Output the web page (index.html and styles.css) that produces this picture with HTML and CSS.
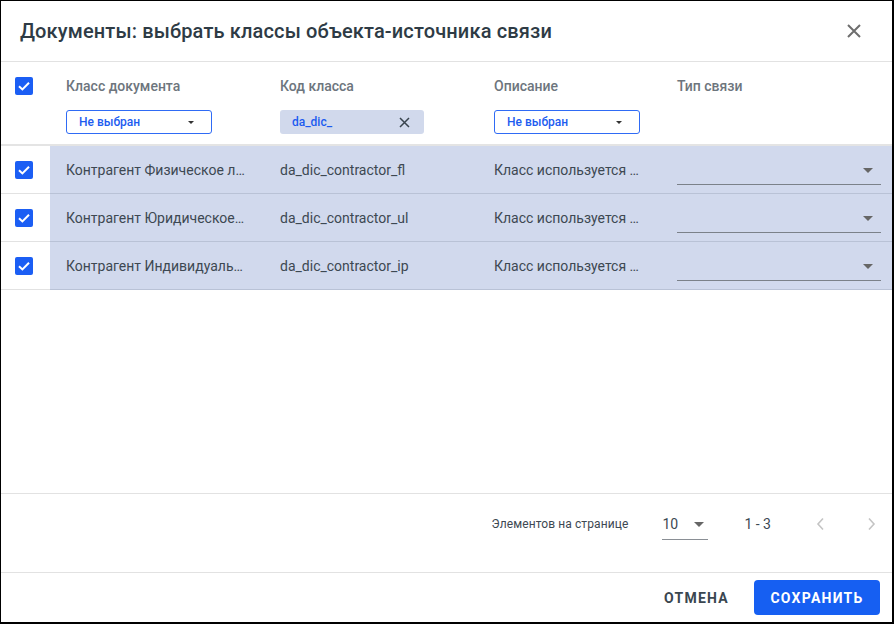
FILE: index.html
```html
<!DOCTYPE html>
<html lang="ru">
<head>
  <meta charset="UTF-8" />
  <title>Документы: выбрать классы объекта-источника связи</title>
  <link rel="stylesheet" href="styles.css">
</head>
<body>
  <div class="dialog">
    <div class="dialog-header">
      <h1>Документы: выбрать классы объекта-источника связи</h1>
      <button class="close-btn" aria-label="Закрыть">
        <svg width="14" height="14" viewBox="0 0 14 14"><path d="M1 1L13 13M13 1L1 13" stroke="#6e6e6e" stroke-width="2" fill="none"/></svg>
      </button>
    </div>

    <div class="table">
      <div class="row head">
        <div class="cell check"><span class="checkbox"></span></div>
        <div class="cell">
          <div class="label">Класс документа</div>
          <div class="filter">Не выбран <span class="caret"></span></div>
        </div>
        <div class="cell">
          <div class="label">Код класса</div>
          <div class="chip">da_dic_
            <svg width="11" height="11" viewBox="0 0 11 11"><path d="M1 1L10 10M10 1L1 10" stroke="#39444e" stroke-width="1.5" fill="none"/></svg>
          </div>
        </div>
        <div class="cell">
          <div class="label">Описание</div>
          <div class="filter">Не выбран <span class="caret"></span></div>
        </div>
        <div class="cell">
          <div class="label">Тип связи</div>
        </div>
      </div>

      <div class="row item">
        <div class="cell check"><span class="checkbox"></span></div>
        <div class="cell"><span class="ellipsis">Контрагент Физическое лицо</span></div>
        <div class="cell">da_dic_contractor_fl</div>
        <div class="cell"><span class="ellipsis">Класс используется для хранения</span></div>
        <div class="cell"><div class="line-select"><span class="caret big"></span></div></div>
      </div>
      <div class="row item">
        <div class="cell check"><span class="checkbox"></span></div>
        <div class="cell"><span class="ellipsis">Контрагент Юридическое лицо</span></div>
        <div class="cell">da_dic_contractor_ul</div>
        <div class="cell"><span class="ellipsis">Класс используется для хранения</span></div>
        <div class="cell"><div class="line-select"><span class="caret big"></span></div></div>
      </div>
      <div class="row item">
        <div class="cell check"><span class="checkbox"></span></div>
        <div class="cell"><span class="ellipsis">Контрагент Индивидуальный предприниматель</span></div>
        <div class="cell">da_dic_contractor_ip</div>
        <div class="cell"><span class="ellipsis">Класс используется для хранения</span></div>
        <div class="cell"><div class="line-select"><span class="caret big"></span></div></div>
      </div>
    </div>

    <div class="paginator">
      <span class="page-label">Элементов на странице</span>
      <div class="page-size">10 <span class="caret big"></span></div>
      <span class="range">1 - 3</span>
      <button class="nav-btn" aria-label="Назад">
        <svg width="10" height="14" viewBox="0 0 10 14"><path d="M7 1.5L2 7L7 12.5" stroke="#c4c4c4" stroke-width="1.6" fill="none"/></svg>
      </button>
      <button class="nav-btn" aria-label="Вперёд">
        <svg width="10" height="14" viewBox="0 0 10 14"><path d="M3 1.5L8 7L3 12.5" stroke="#c4c4c4" stroke-width="1.6" fill="none"/></svg>
      </button>
    </div>

    <div class="dialog-footer">
      <button class="btn btn-text">Отмена</button>
      <button class="btn btn-primary">Сохранить</button>
    </div>
  </div>
</body>
</html>
```

FILE: styles.css
```css
* {
  box-sizing: border-box;
}
body {
  margin: 0;
  font-family: Roboto, "Liberation Sans", Arial, sans-serif;
  background: #fff;
  color: #3b4650;
}
button {
  font-family: inherit;
  border: none;
  background: none;
  cursor: pointer;
  padding: 0;
}
.dialog {
  width: 894px;
  height: 624px;
  border: 1px solid #000;
  border-right-width: 2px;
  border-bottom-width: 2px;
  display: flex;
  flex-direction: column;
  background: #fff;
}
.dialog-header {
  height: 61px;
  flex: none;
  display: flex;
  align-items: center;
  justify-content: space-between;
  padding: 0 23px 0 19px;
  border-bottom: 1px solid #e2e2e2;
}
.dialog-header h1 {
  margin: 0;
  font-size: 20px;
  font-weight: 500;
  color: #2e3b45;
  letter-spacing: 0.15px;
}
.close-btn {
  width: 30px;
  height: 30px;
  display: flex;
  align-items: center;
  justify-content: center;
}

/* table */
.table {
  flex: 1;
}
.row {
  display: grid;
  grid-template-columns: 49px 214px 214px 183px 231px;
}
.cell {
  padding-left: 16px;
  font-size: 14px;
  min-width: 0;
}
.cell.check {
  padding-left: 14px;
  background: #fff;
}
.checkbox {
  display: block;
  width: 18px;
  height: 18px;
  border-radius: 2px;
  background: #1b5ef4 url("data:image/svg+xml,%3Csvg xmlns='http://www.w3.org/2000/svg' viewBox='0 0 18 18'%3E%3Cpath d='M4 9.2L7.4 12.4L14 5.8' stroke='white' stroke-width='2' fill='none'/%3E%3C/svg%3E") no-repeat center;
}
.head {
  height: 84px;
  border-bottom: 2px solid #e4e4e4;
}
.head .cell {
  padding-top: 14px;
}
.head .cell.check {
  padding-top: 15px;
}
.label {
  height: 20px;
  line-height: 20px;
  font-weight: 500;
  color: #6d757d;
  margin-bottom: 14px;
}
.filter, .chip {
  width: 146px;
  height: 24px;
  border-radius: 3px;
  display: flex;
  align-items: center;
  justify-content: space-between;
  font-size: 12px;
  font-weight: 500;
  color: #1d5cf0;
}
.filter {
  border: 1px solid #2f6bf5;
  padding: 0 17px 0 12px;
}
.chip {
  width: 144px;
  background: #d1d9ec;
  padding: 0 14px 0 12px;
}
.caret {
  width: 0;
  height: 0;
  border-left: 3.5px solid transparent;
  border-right: 3.5px solid transparent;
  border-top: 3.5px solid #333;
}
.caret.big {
  border-left-width: 5px;
  border-right-width: 5px;
  border-top-width: 5px;
  border-top-color: #666;
}
.item {
  height: 48px;
}
.item .cell {
  background: #d1d9ed;
  border-bottom: 1px solid #b9c2d6;
  display: flex;
  align-items: center;
  color: #3d4852;
}
.item .cell.check {
  background: #fff;
  border-bottom-color: #e2e2e2;
}
.ellipsis {
  display: block;
  max-width: 180px;
  white-space: nowrap;
  overflow: hidden;
  text-overflow: ellipsis;
}
.item .cell:nth-child(4) .ellipsis {
  max-width: 148px;
}
.line-select {
  width: 204px;
  height: 39px;
  align-self: flex-start;
  border-bottom: 1px solid #7b8189;
  display: flex;
  align-items: center;
  justify-content: flex-end;
  padding: 10px 8px 0 0;
}

/* paginator */
.paginator {
  height: 80px;
  flex: none;
  border-top: 1px solid #e2e2e2;
  border-bottom: 1px solid #e2e2e2;
  display: flex;
  align-items: flex-start;
  justify-content: flex-end;
  padding: 20px 1px 0 0;
  font-size: 12px;
  color: #3d4852;
}
.page-label {
  line-height: 16px;
  margin-top: 2px;
  letter-spacing: 0.1px;
}
.page-size {
  width: 46px;
  height: 26px;
  margin-left: 34px;
  border-bottom: 1px solid #8a8f95;
  display: flex;
  align-items: flex-start;
  justify-content: space-between;
  font-size: 14px;
  line-height: 20px;
  padding: 0 4px 0 0;
}
.page-size .caret {
  margin-top: 8px;
}
.range {
  font-size: 14px;
  line-height: 20px;
  margin: 0 30px 0 36px;
}
.nav-btn {
  width: 40px;
  height: 20px;
  display: flex;
  align-items: center;
  justify-content: center;
}
.nav-btn + .nav-btn {
  margin-left: 10px;
}

/* footer */
.dialog-footer {
  height: 49px;
  flex: none;
  display: flex;
  align-items: center;
  justify-content: flex-end;
  gap: 9px;
  padding: 0 12px 0 0;
}
.btn {
  height: 35px;
  padding: 0 16px;
  border-radius: 4px;
  font-size: 14px;
  font-weight: 700;
  text-transform: uppercase;
  letter-spacing: 1.25px;
}
.btn-text {
  color: #3a4650;
}
.btn-primary {
  width: 126px;
  background: #165ff2;
  color: #fff;
}
```
